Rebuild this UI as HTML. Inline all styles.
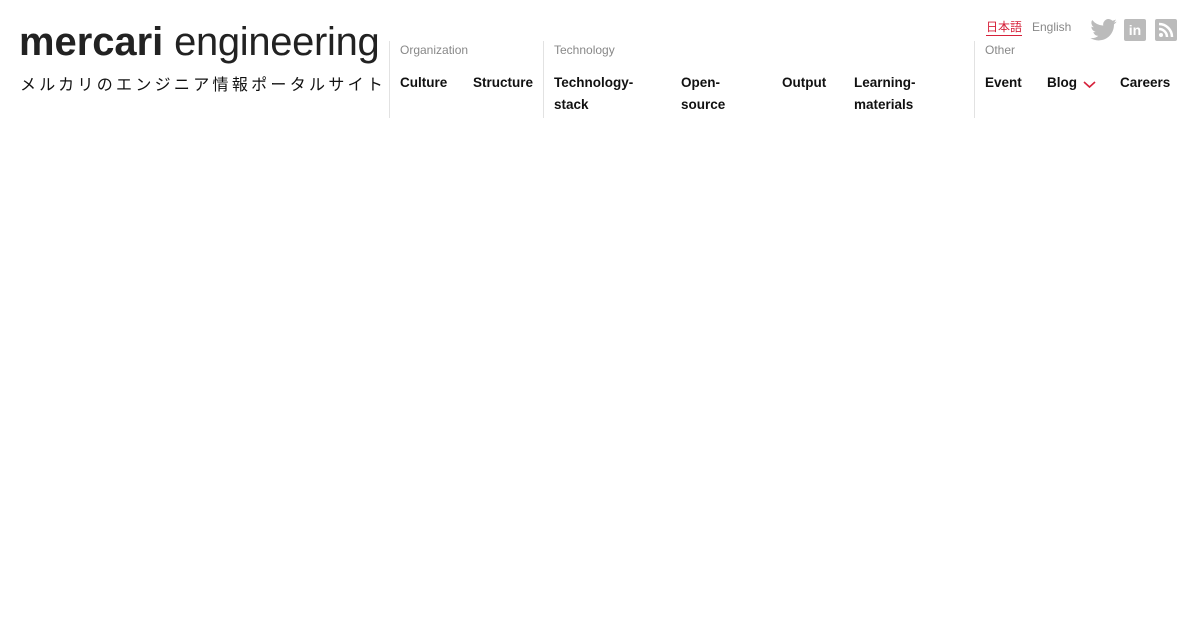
<!DOCTYPE html>
<html><head><meta charset="utf-8"><style>
*{margin:0;padding:0;box-sizing:border-box}
body{width:1200px;height:630px;background:#fff;position:relative;font-family:"Liberation Sans","Noto Sans CJK JP",sans-serif;color:#222;overflow:hidden}
.a{position:absolute;white-space:nowrap}
.logo{left:19px;top:17px;font-size:40px;letter-spacing:-0.3px;color:#222;line-height:50px;transform:scaleX(0.998);transform-origin:left}
.logo b{font-weight:bold;letter-spacing:0}
.sub{left:20px;top:71px;font-size:16px;letter-spacing:3.3px;color:#111}
.vl{position:absolute;top:41px;width:1px;height:77px;background:#e2e2e2}
.cat{font-size:12px;color:#888;top:43px}
.n{font-size:13.5px;font-weight:bold;color:#111;line-height:22px;top:72px}
.ic{position:absolute;top:19px;width:22px;height:22px;background:#bbb;border-radius:2px;color:#fff;font-weight:bold;font-size:14px;text-align:center;line-height:22px}
</style></head><body>
<div class="a logo"><b>mercari</b> engineering</div>
<div class="a sub">メルカリのエンジニア情報ポータルサイト</div>
<div class="vl" style="left:389px"></div>
<div class="vl" style="left:543px"></div>
<div class="vl" style="left:974px;top:41px"></div>
<div class="a cat" style="left:400px">Organization</div>
<div class="a cat" style="left:554px">Technology</div>
<div class="a cat" style="left:985px">Other</div>
<div class="a n" style="left:400px">Culture</div>
<div class="a n" style="left:473px">Structure</div>
<div class="a n" style="left:554px">Technology-<br>stack</div>
<div class="a n" style="left:681px">Open-<br>source</div>
<div class="a n" style="left:782px">Output</div>
<div class="a n" style="left:854px">Learning-<br>materials</div>
<div class="a n" style="left:985px">Event</div>
<div class="a n" style="left:1047px">Blog</div>
<svg class="a" style="left:1083px;top:80px" width="13" height="9" viewBox="0 0 13 9"><path d="M1 2l5.5 5L12 2" fill="none" stroke="#d6213a" stroke-width="1.6"/></svg>
<div class="a n" style="left:1120px">Careers</div>
<div class="a" style="left:986px;top:19px;font-size:12px;color:#d6213a;border-bottom:1px solid #d6213a;line-height:16px">日本語</div>
<div class="a" style="left:1032px;top:19px;font-size:12px;color:#888;line-height:16px">English</div>
<svg class="a" style="left:1090px;top:19px" width="27" height="22" viewBox="0 0 24 20"><path d="M24 2.4a10 10 0 0 1-2.8.8A5 5 0 0 0 23.3.4a10 10 0 0 1-3.1 1.2A4.9 4.9 0 0 0 11.8 6 14 14 0 0 1 1.7.9a4.9 4.9 0 0 0 1.5 6.6A4.9 4.9 0 0 1 1 6.9a4.9 4.9 0 0 0 3.900 4.9 5 5 0 0 1-2.2.1 4.9 4.9 0 0 0 4.6 3.4A9.9 9.9 0 0 1 0 17.3 14 14 0 0 0 7.5 19.5c9.1 0 14-7.500 14-14v-.6A10 10 0 0 0 24 2.4z" fill="#bbb"/></svg>
<div class="ic" style="left:1124px">in</div>
<svg class="a" style="left:1155px;top:19px" width="22" height="22" viewBox="0 0 22 22"><rect width="22" height="22" rx="2" fill="#bbb"/><circle cx="6" cy="16" r="2" fill="#fff"/><path d="M4 10a8 8 0 0 1 8 8M4 5a13 13 0 0 1 13 13" fill="none" stroke="#fff" stroke-width="2.5"/></svg>
</body></html>
